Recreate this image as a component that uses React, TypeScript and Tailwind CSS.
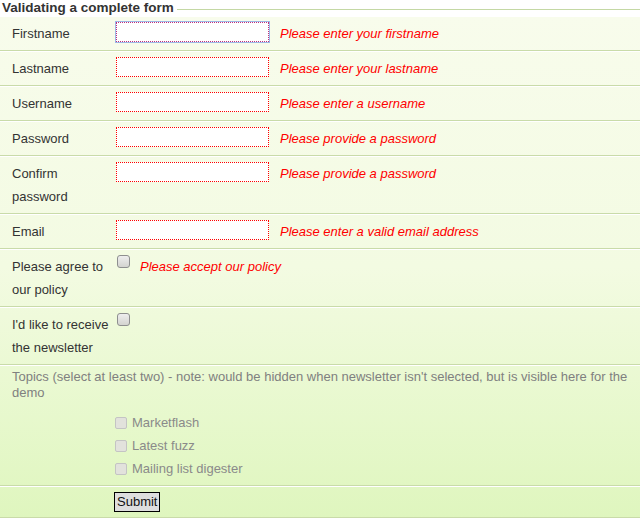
import React from "react";

const Box = ({ disabled = false }: { disabled?: boolean }) =>
  disabled ? (
    <div className="w-[12px] h-[12px] border border-[#c4c4c4] bg-[#e2e2dc] rounded-[2px] shrink-0" />
  ) : (
    <div className="w-[13px] h-[13px] border border-[#8e8f8f] rounded-[3px] bg-gradient-to-b from-[#eeeeee] to-[#d4d4d0] shrink-0" />
  );

const Row = ({ children }: { children: React.ReactNode }) => (
  <div className="flex border-b border-[#c9dba9] shadow-[inset_0_1px_0_#ffffff]">{children}</div>
);

const Label = ({ children }: { children: React.ReactNode }) => (
  <div className="w-[116px] shrink-0 pl-[12px] pt-[6px] pb-[5px] leading-[23px] text-[#333333]">{children}</div>
);

const Err = ({ children, ml = "ml-[11px]" }: { children: React.ReactNode; ml?: string }) => (
  <span className={`${ml} italic text-[#ff0000] leading-[23px]`}>{children}</span>
);

const TextRow = ({ label, error, focus = false }: { label: React.ReactNode; error: string; focus?: boolean }) => (
  <Row>
    <Label>{label}</Label>
    <div className="flex items-start pt-[6px]">
      <div
        className={`w-[153px] h-[20px] bg-white border border-dotted ${
          focus ? "border-[#c0307a] outline outline-1 outline-[#9cb8e8]" : "border-[#ff0000]"
        }`}
      />
      <Err>{error}</Err>
    </div>
  </Row>
);

export default function App() {
  return (
    <div
      className="w-[640px] h-[519px] bg-white text-[13px]"
      style={{ fontFamily: '"Liberation Sans", Arial, sans-serif' }}
    >
      <div className="flex items-start h-[16px] bg-white">
        <span className="pl-[2px] font-bold text-[13.5px] leading-[16px] text-[#333333]">Validating a complete form</span>
        <div className="flex-1 ml-[3px] mt-[9px] border-t border-[#c4d8a4]" />
      </div>
      <div className="bg-gradient-to-b from-[#f8fcec] via-[#f3fbe2] to-[#dff6be]">
        <TextRow label="Firstname" error="Please enter your firstname" focus />
        <TextRow label="Lastname" error="Please enter your lastname" />
        <TextRow label="Username" error="Please enter a username" />
        <TextRow label="Password" error="Please provide a password" />
        <TextRow label={<>Confirm<br />password</>} error="Please provide a password" />
        <TextRow label="Email" error="Please enter a valid email address" />
        <Row>
          <Label>Please agree to our policy</Label>
          <div className="flex items-start pt-[6px]">
            <div className="ml-[1px]">
              <Box />
            </div>
            <span className="ml-[10px] italic text-[#ff0000] leading-[23px]">Please accept our policy</span>
          </div>
        </Row>
        <Row>
          <Label>I'd like to receive the newsletter</Label>
          <div className="pt-[6px] ml-[1px]">
            <Box />
          </div>
        </Row>
        <div className="border-b border-[#c9dba9] shadow-[inset_0_1px_0_#ffffff] pt-[4px] pb-[5px]">
          <p className="pl-[12px] pr-[4px] leading-[16px] text-[#808080]">
            Topics (select at least two) - note: would be hidden when newsletter isn't selected, but is visible here for the demo
          </p>
          <div className="mt-[10px] ml-[115px] text-[#8a8a8a]">
            {["Marketflash", "Latest fuzz", "Mailing list digester"].map((t) => (
              <div key={t} className="flex items-center h-[23px]">
                <Box disabled />
                <span className="ml-[5px]">{t}</span>
              </div>
            ))}
          </div>
        </div>
        <div className="border-b border-[#c9dba9] shadow-[inset_0_1px_0_#ffffff] h-[32px] flex items-center pl-[114px]">
          <button className="h-[20px] px-[2px] border border-black bg-[#dedede] text-[13px] leading-[16px] text-[#111111]">
            Submit
          </button>
        </div>
      </div>
    </div>
  );
}
